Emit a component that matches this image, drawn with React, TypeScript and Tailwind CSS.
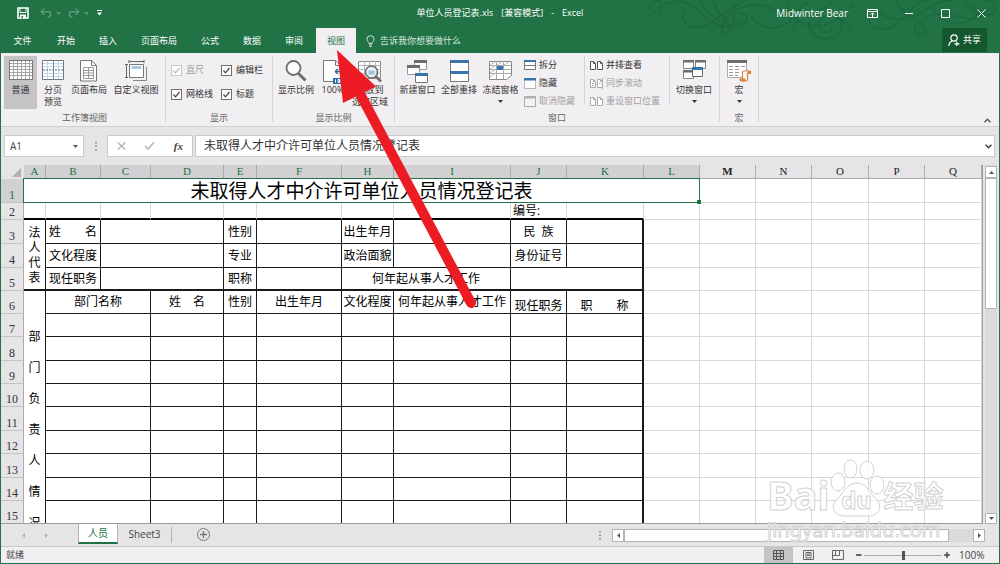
import type { ReactNode } from "react";

const tabs = ["开始", "插入", "页面布局", "公式", "数据", "审阅", "视图"];

const columns = [
  { name: "A", width: "w-[22px]" },
  { name: "B", width: "w-[55px]" },
  { name: "C", width: "w-[50px]" },
  { name: "D", width: "w-[73px]" },
  { name: "E", width: "w-[33px]" },
  { name: "F", width: "w-[85px]" },
  { name: "H", width: "w-[52px]" },
  { name: "I", width: "w-[117px]" },
  { name: "J", width: "w-[56px]" },
  { name: "K", width: "w-[77px]" },
  { name: "L", width: "w-[56px]" },
  { name: "M", width: "w-[56px]" },
  { name: "N", width: "w-[56px]" },
  { name: "O", width: "w-[57px]" },
  { name: "P", width: "w-[56px]" },
  { name: "Q", width: "" },
];

interface ICell {
  text?: string;
  span?: number;
  bottom?: boolean;
}

const personRows: ICell[][] = [
  [
    { text: "姓\u3000\u3000名" },
    { span: 2 },
    { text: "性别" },
    {},
    { text: "出生年月" },
    {},
    { text: "民\u00a0\u00a0族" },
    {},
  ],
  [
    { text: "文化程度" },
    { span: 2 },
    { text: "专业" },
    {},
    { text: "政治面貌" },
    {},
    { text: "身份证号" },
    {},
  ],
  [
    { text: "现任职务" },
    { span: 2 },
    { text: "职称" },
    {},
    { text: "何年起从事人才工作", span: 2 },
    { span: 2 },
  ],
];

const departmentHead: ICell[] = [
  { text: "部门名称", span: 2 },
  { text: "姓\u3000名" },
  { text: "性别" },
  { text: "出生年月" },
  { text: "文化程度" },
  { text: "何年起从事人才工作" },
  { text: "现任职务", bottom: true },
  { text: "职\u3000\u3000称", bottom: true },
];

const emptyRow: ICell[] = [{ span: 2 }, {}, {}, {}, {}, {}, {}, {}];

const emptyRows = [
  { n: 7, height: "h-[23px]" },
  { n: 8, height: "h-[24px]" },
  { n: 9, height: "h-[23px]" },
  { n: 10, height: "h-[23px]" },
  { n: 11, height: "h-[24px]" },
  { n: 12, height: "h-[23px]" },
  { n: 13, height: "h-[24px]" },
  { n: 14, height: "h-[23px]" },
  { n: 15, height: "h-[23px]" },
];

const Caret: React.FC<{ className?: string }> = ({ className = "" }) => (
  <svg className={className} width="5" height="3" viewBox="0 0 5 3">
    <path d="M0 0h5L2.5 3z" fill="currentColor" />
  </svg>
);

/* ---------- ribbon icons ---------- */

const NormalIcon = () => (
  <svg width="24" height="21" viewBox="0 0 24 21" fill="none">
    <path d="M.5.5h23v19H.5z" fill="#fff" stroke="#777" />
    <path
      d="M4.5 1v18M8.5 1v18M12.5 1v18M16.5 1v18M20.5 1v18M1 3.5h22M1 6.5h22M1 9.5h22M1 12.5h22M1 15.5h22"
      stroke="#a5a5a5"
    />
  </svg>
);

const PageBreakIcon = () => (
  <svg width="22" height="21" viewBox="0 0 22 21" fill="none">
    <path d="M.5.5h21v19H.5z" fill="#fff" stroke="#777" />
    <path d="M1 3.5h20M1 6.5h20M1 13.5h20M1 16.5h20M5.5 1v18M16.5 1v18" stroke="#c3d8e6" />
    <path d="M1 10h20" stroke="#4a6f8f" strokeDasharray="2 1" />
    <path d="M11.5 1v19" stroke="#6c8ba5" />
  </svg>
);

const PageLayoutIcon = () => (
  <svg width="18" height="22" viewBox="0 0 18 22" fill="none">
    <path d="M.5.5h11l5 5v15.5H.5z" fill="#fff" stroke="#777" />
    <path d="M11.5.5v5h5" stroke="#777" />
    <path d="M3.5 7.5h10v11h-10zM3.5 10.5h10M3.5 13h10M3.5 15.5h10M8.5 7.5v11" stroke="#999" />
  </svg>
);

const CustomViewIcon = () => (
  <svg width="22" height="22" viewBox="0 0 22 22" fill="none">
    <path d="M4.5 4.5h14v13h-14z" fill="#fff" stroke="#777" />
    <path d="M6.5 6h10v3h-10z" fill="#a9cbe6" />
    <path d="M4 1.5h15M1.5 4v14M4 0v3M19 0v3M0 4.5h3M0 17.5h3" stroke="#666" />
    <path d="M21.5 7v13.5H8" stroke="#888" />
  </svg>
);

const ZoomIcon = () => (
  <svg width="22" height="22" viewBox="0 0 22 22" fill="none">
    <circle cx="8.5" cy="8" r="7" fill="#fff" stroke="#6e6e6e" strokeWidth="1.8" />
    <path d="M13.5 13.5l7 7" stroke="#6e6e6e" strokeWidth="3" />
  </svg>
);

const HundredIcon = () => (
  <svg width="20" height="24" viewBox="0 0 20 24" fill="none">
    <path d="M.5.5h12l5 5v16H.5z" fill="#fff" stroke="#777" />
    <path d="M12.5.5v5h5" stroke="#777" />
    <path d="M12 11.5h7M12 11.5l3-2.5M12 11.5l3 2.5" stroke="#2e6da4" strokeWidth="1.4" />
    <path d="M10 18h10v6H10z" fill="#2e6da4" />
    <path d="M12.5 19.5v3M15 19.5h1.5v3H15zM18 19.5v3" stroke="#fff" />
  </svg>
);

const ZoomSelectionIcon = () => (
  <svg width="24" height="23" viewBox="0 0 24 23" fill="none">
    <path d="M.5 1.5h22v17H.5z" fill="#fff" stroke="#888" />
    <path d="M1 5.5h22M1 9.5h22M1 13.5h22M6.5 1v17M11.5 1v17M17.5 1v17" stroke="#b5b5b5" />
    <circle cx="13.5" cy="12" r="6" fill="#e8f1f9" stroke="#6e6e6e" strokeWidth="1.6" />
    <path d="M10.5 10.5h6v4h-6z" fill="#9cc3e3" />
    <path d="M18 16.5l5 5" stroke="#6e6e6e" strokeWidth="2.6" />
  </svg>
);

const NewWindowIcon = () => (
  <svg width="22" height="24" viewBox="0 0 22 24" fill="none">
    <path d="M7.5.5h12v9h-12z" fill="#fff" stroke="#999" />
    <path d="M7 0h13v3H7z" fill="#6e6e6e" />
    <path d="M.5 5.5h12v9H.5z" fill="#fff" stroke="#999" />
    <path d="M0 5h13v3H0z" fill="#6e6e6e" />
    <path d="M8.5 13.5h12v9h-12z" fill="#fff" stroke="#777" />
    <path d="M8 13h13v3H8z" fill="#3874ac" />
  </svg>
);

const ArrangeIcon = () => (
  <svg width="19" height="23" viewBox="0 0 19 23" fill="none">
    <path d="M.5.5h18v21H.5z" fill="#fff" stroke="#777" />
    <path d="M0 0h19v3H0zM0 11h19v3H0z" fill="#3874ac" />
  </svg>
);

const FreezeIcon = () => (
  <svg width="23" height="21" viewBox="0 0 23 21" fill="none">
    <path d="M.5 1.5h22v14l-5 4H.5z" fill="#fff" stroke="#888" />
    <path d="M1 5.5h21M1 9.5h21M1 13.5h21M7.5 1v18M14.5 1v18" stroke="#aaa" />
    <path d="M1 5l5-3M1 9l6-4M1 13l6-4M8 5l5-3M15 5l5-3M1 17l6-4" stroke="#bbb" />
    <path d="M8 6h6v4H8z" fill="#3874ac" />
  </svg>
);

const SwitchIcon = () => (
  <svg width="23" height="20" viewBox="0 0 23 20" fill="none">
    <path d="M.5.5h10v8H.5zM12.5.5h10v8h-10zM.5 10.5h10v8H.5z" fill="#fff" stroke="#888" />
    <path d="M0 0h11v2.500H0zM12 0h11v2.500H12zM0 10h11v2.500H0z" fill="#6e6e6e" />
    <path d="M9.5 7.5h10v9h-10z" fill="#fff" stroke="#666" />
    <path d="M9 7h11v3H9z" fill="#3874ac" />
  </svg>
);

const MacroIcon = () => (
  <svg width="24" height="22" viewBox="0 0 24 22" fill="none">
    <path d="M.5.5h19v17H.5z" fill="#fff" stroke="#aaa" />
    <path d="M0 0h20v3H0z" fill="#6e6e6e" />
    <path
      d="M2 6.5h4M8 6.5h4M14 6.500h4M2 9.500h4M8 9.500h4M2 12.500h4M8 12.500h4M2 15.500h4M8 15.500h3"
      stroke="#999"
    />
    <path
      d="M15.500 12.500c0-1 .5-1.500 1.500-1.500h5.500v2h-2v6.500c0 1-.5 1.500-1.500 1.500h-3.500z"
      fill="#fff"
      stroke="#dd8239"
      strokeWidth="1.200"
    />
    <path d="M12.500 18.500h6v2.700h-5c-1 0-1-1-1-2.700z" fill="#dd8239" />
    <path d="M21 11h3v3h-3z" fill="#dd8239" />
  </svg>
);

const SplitIcon = () => (
  <svg width="12" height="10" viewBox="0 0 12 10" fill="none">
    <path d="M.5.5h11v9H.5z" fill="#fff" stroke="#777" />
    <path d="M0 0h12v2H0z" fill="#3874ac" />
    <path d="M1 5.5h10" stroke="#777" />
  </svg>
);

const HideIcon = () => (
  <svg width="12" height="11" viewBox="0 0 12 11" fill="none">
    <path d="M.5.5h11v10H.5z" fill="#fff" stroke="#777" strokeDasharray="1 1" />
    <path d="M0 0h12v2.500H0z" fill="#3874ac" />
  </svg>
);

const UnhideIcon = () => (
  <svg width="12" height="11" viewBox="0 0 12 11" fill="none">
    <path d="M.5.5h11v10H.5z" fill="#f4f2f4" stroke="#aaa" />
    <path d="M0 0h12v2.500H0z" fill="#b0b0b0" />
  </svg>
);

const PagesIcon: React.FC<{ color: string; sync?: boolean }> = ({ color, sync }) => (
  <svg width="13" height="11" viewBox="0 0 13 11" fill="none" stroke={color}>
    <path d="M.5 1.5h3l2 2v6h-5z" fill="#fff" />
    <path d="M7.5 1.5h3l2 2v6h-5z" fill="#fff" />
    <path d="M3.5 1.5v2h2M10.5 1.5v2h2" />
    {sync && <path d="M12.5 0v11M2 5.5h2M9 5.5h2M2 7.5h2" />}
  </svg>
);

/* ---------- ribbon parts ---------- */

const RibbonButton: React.FC<{
  icon: ReactNode;
  lines: string[];
  width: string;
  active?: boolean;
  caret?: boolean;
}> = ({ icon, lines, width, active, caret }) => (
  <button
    type="button"
    className={`flex h-[53px] shrink-0 flex-col items-center pt-1 ${width} ${
      active ? "bg-[#c5c3c5]" : "hover:bg-[#dcdadc]"
    }`}
  >
    <span className="flex h-6 items-start justify-center">{icon}</span>
    {lines.map((line) => (
      <span key={line} className="whitespace-nowrap leading-[12px]">
        {line}
      </span>
    ))}
    {caret && <Caret className="mt-1" />}
  </button>
);

const SmallButton: React.FC<{ icon: ReactNode; label: string; disabled?: boolean }> = ({
  icon,
  label,
  disabled,
}) => (
  <button
    type="button"
    disabled={disabled}
    className="flex h-[18px] items-center gap-[3px] whitespace-nowrap leading-[12px] disabled:text-[#a3a1a3]"
  >
    {icon}
    {label}
  </button>
);

const RibbonGroup: React.FC<{ title: string; className?: string; children: ReactNode }> = ({
  title,
  className = "",
  children,
}) => (
  <div className="flex shrink-0 flex-col">
    <div className={`flex h-14 items-start ${className}`}>{children}</div>
    <div className="text-center leading-[12px] text-[#666]">{title}</div>
  </div>
);

const Separator = () => <div className="mb-1 w-px shrink-0 bg-[#d5d3d5]" />;

const InnerSeparator = () => <div className="h-12 w-px shrink-0 bg-[#d5d3d5]" />;

const RibbonCheckbox: React.FC<{ label: string; disabled?: boolean }> = ({ label, disabled }) => (
  <label
    className={`flex h-6 items-center gap-1 whitespace-nowrap ${disabled ? "text-[#a3a1a3]" : ""}`}
  >
    <span className="relative flex">
      <input
        type="checkbox"
        defaultChecked
        disabled={disabled}
        className="peer size-[11px] appearance-none border border-[#6e6e6e] bg-white disabled:border-[#c8c6c8]"
      />
      <svg
        className="pointer-events-none absolute inset-0 hidden peer-checked:block"
        width="11"
        height="11"
        viewBox="0 0 11 11"
        fill="none"
      >
        <path d="M2.5 5.5l2 2.300 4-4.800" stroke={disabled ? "#bbb" : "#444"} strokeWidth="1.200" />
      </svg>
    </span>
    {label}
  </label>
);

/* ---------- title bar ---------- */

const Swirls = () => (
  <svg
    className="pointer-events-none absolute right-0 top-0"
    width="352"
    height="53"
    viewBox="0 0 352 53"
    fill="none"
    stroke="#1c683c"
    strokeWidth="1.400"
  >
    <path d="M14 2c-8-4-14 4-9 9s12 0 8-5M12 8c12-10 28-8 38 2s24 20 38 17 16-13 6-14-10 9-2 11" />
    <path d="M38 10c-6 12 4 20 16 17s30-20 44-26M52 0c8 14 24 26 36 24" />
    <path d="M66 0c4 14 14 20 17 27s-7 10-8 2 10-22 30-24 30 12 46 12 26-6 34-16" />
    <path d="M104 16c8 12 22 16 34 8s12-18 24-22M140 2c2 14 14 24 28 24s24-6 40-22" />
    <path d="M162 22c0 20 30 22 32 6s-22-16-22-4 14 10 13 2M154 20c-8 4-12 10-6 10M192 20c14 4 16 12 6 10" />
    <path d="M222 18c0 12 18 14 28 6s18-24 32-24M226 6c10 14 30 18 46 8s22-14 34-14" />
    <path d="M248 0c8 16 26 20 30 27s-8 11-10 3 14-18 30-16 34 12 44-6" />
    <path d="M286 8c8 14 24 20 38 12s6-18-2-12M318 0c4 8 16 18 26 14s2-14-6-14" />
  </svg>
);

const TitleBar = () => (
  <div className="relative grid h-7 grid-cols-[1fr_auto_1fr] items-center pb-[2px] text-[9px] text-white">
    <div className="flex items-center pl-4">
      <button type="button" aria-label="保存">
        <svg width="12" height="12" viewBox="0 0 12 12" fill="none">
          <path d="M1 1h10v10H1z" stroke="#fff" strokeWidth="1.600" />
          <path d="M3 1v4.500h6V1" stroke="#fff" />
          <path d="M3 7.500h6v4H3z" fill="#fff" />
          <path d="M4.500 9H6v2.500H4.500z" fill="#217346" />
        </svg>
      </button>
      <button type="button" aria-label="撤消" className="ml-[11px] flex items-center gap-1 text-[#5c9a76]">
        <svg width="12" height="10" viewBox="0 0 12 10" fill="none" stroke="currentColor" strokeWidth="1.400">
          <path d="M4.5.5L1 3.700l3.500 3M1 3.700h6.500c4.500 0 4.500 5.300 0 5.300" />
        </svg>
        <Caret />
      </button>
      <button type="button" aria-label="恢复" className="ml-[7px] flex items-center gap-1 text-[#5c9a76]">
        <svg width="12" height="10" viewBox="0 0 12 10" fill="none" stroke="currentColor" strokeWidth="1.400">
          <path d="M7.5.5L11 3.700l-3.500 3M11 3.700H4.500C0 3.700 0 9 4.500 9" />
        </svg>
        <Caret />
      </button>
      <button type="button" aria-label="自定义快速访问工具栏" className="ml-2">
        <svg width="5" height="6" viewBox="0 0 5 6" fill="#fff">
          <path d="M0 0h5v1H0zM0 2.500h5L2.500 5.500z" />
        </svg>
      </button>
    </div>
    <h1 className="flex gap-2 whitespace-nowrap">
      <span>单位人员登记表.xls</span>
      <span>[兼容模式]</span>
      <span>-</span>
      <span>Excel</span>
    </h1>
    <div className="z-10 flex items-center justify-end pr-[13px]">
      <span className="text-[10px]">Midwinter Bear</span>
      <button type="button" aria-label="功能区显示选项" className="ml-[19px]">
        <svg width="11" height="9" viewBox="0 0 11 9" fill="none" stroke="#fff">
          <path d="M.5.5h10v8H.5zM.5 2.500h10M5.500 8V4M3.500 5.800l2-2 2 2" />
        </svg>
      </button>
      <button type="button" aria-label="最小化" className="ml-[27px]">
        <svg width="9" height="9" viewBox="0 0 9 9" stroke="#fff">
          <path d="M0 4.500h8" />
        </svg>
      </button>
      <button type="button" aria-label="还原" className="ml-[27px]">
        <svg width="9" height="9" viewBox="0 0 9 9" fill="none" stroke="#fff">
          <path d="M.5.5h8v8h-8z" />
        </svg>
      </button>
      <button type="button" aria-label="关闭" className="ml-[27px]">
        <svg width="9" height="9" viewBox="0 0 9 9" stroke="#fff">
          <path d="M.5.5l8 8M8.500.5l-8 8" />
        </svg>
      </button>
    </div>
  </div>
);

const TabBar = () => (
  <div className="relative flex h-[25px] items-stretch text-[9px] text-white">
    <button type="button" className="w-[43px]">
      文件
    </button>
    <nav className="ml-[2px] flex gap-[2px]">
      {tabs.map((tab) => (
        <button
          key={tab}
          type="button"
          className={`whitespace-nowrap px-[11px] ${
            tab === "视图" ? "bg-[#f1eff1] text-[#217346]" : "hover:bg-[#439467]"
          }`}
        >
          {tab}
        </button>
      ))}
    </nav>
    <button type="button" className="ml-[10px] flex items-center gap-[5px] text-[#d5e6dc]">
      <svg width="9" height="12" viewBox="0 0 9 12" fill="none" stroke="currentColor">
        <path d="M3 8.500C3 7 1 6.500 1 4.200a3.500 3.500 0 017 0C8 6.500 6 7 6 8.500zM3 10h3M3.500 11.500h2" />
      </svg>
      告诉我你想要做什么
    </button>
    <button
      type="button"
      className="mb-px ml-auto mr-3 flex w-[45px] items-center justify-center gap-[3px] bg-[#15582f]"
    >
      <svg width="12" height="13" viewBox="0 0 12 13" fill="none" stroke="#fff" strokeWidth="1.200">
        <circle cx="6" cy="4" r="3.200" />
        <path d="M.8 12c.3-3 1.800-4.500 3.700-5.200M8.800 7.500V12M6.500 9.800h5" />
      </svg>
      共享
    </button>
  </div>
);

const Ribbon = () => (
  <div className="flex h-[74px] border-b border-[#d2d0d2] bg-[#f1eff1] pl-[3px] pt-[3px] text-[9px] text-[#333]">
    <RibbonGroup title="工作簿视图" className="pr-[2px]">
      <RibbonButton icon={<NormalIcon />} lines={["普通"]} width="w-[33px]" active />
      <RibbonButton icon={<PageBreakIcon />} lines={["分页", "预览"]} width="w-[32px]" />
      <RibbonButton icon={<PageLayoutIcon />} lines={["页面布局"]} width="w-[40px]" />
      <RibbonButton icon={<CustomViewIcon />} lines={["自定义视图"]} width="w-[54px]" />
    </RibbonGroup>
    <Separator />
    <RibbonGroup title="显示" className="w-[106px] gap-3 pl-[5px] pt-[2px]">
      <div>
        <RibbonCheckbox label="直尺" disabled />
        <RibbonCheckbox label="网格线" />
      </div>
      <div className="-ml-1">
        <RibbonCheckbox label="编辑栏" />
        <RibbonCheckbox label="标题" />
      </div>
    </RibbonGroup>
    <Separator />
    <RibbonGroup title="显示比例" className="w-[121px] pl-[3px]">
      <RibbonButton icon={<ZoomIcon />} lines={["显示比例"]} width="w-[40px]" />
      <RibbonButton icon={<HundredIcon />} lines={["100%"]} width="w-[34px]" />
      <RibbonButton icon={<ZoomSelectionIcon />} lines={["缩放到", "选定区域"]} width="w-[40px]" />
    </RibbonGroup>
    <Separator />
    <RibbonGroup title="窗口" className="w-[324px] pl-[2px]">
      <RibbonButton icon={<NewWindowIcon />} lines={["新建窗口"]} width="w-[41px]" />
      <RibbonButton icon={<ArrangeIcon />} lines={["全部重排"]} width="w-[42px]" />
      <RibbonButton icon={<FreezeIcon />} lines={["冻结窗格"]} width="w-[41px]" caret />
      <div className="ml-[3px] w-[60px]">
        <SmallButton icon={<SplitIcon />} label="拆分" />
        <SmallButton icon={<HideIcon />} label="隐藏" />
        <SmallButton icon={<UnhideIcon />} label="取消隐藏" disabled />
      </div>
      <InnerSeparator />
      <div className="w-[84px] pl-[5px]">
        <SmallButton icon={<PagesIcon color="#555" />} label="并排查看" />
        <SmallButton icon={<PagesIcon color="#aaa" sync />} label="同步滚动" disabled />
        <SmallButton icon={<PagesIcon color="#aaa" />} label="重设窗口位置" disabled />
      </div>
      <InnerSeparator />
      <RibbonButton icon={<SwitchIcon />} lines={["切换窗口"]} width="w-[48px]" caret />
    </RibbonGroup>
    <Separator />
    <RibbonGroup title="宏" className="w-[38px]">
      <RibbonButton icon={<MacroIcon />} lines={["宏"]} width="w-[38px]" caret />
    </RibbonGroup>
    <Separator />
    <button type="button" aria-label="折叠功能区" className="mb-[3px] ml-auto mr-2 self-end">
      <svg width="7" height="5" viewBox="0 0 7 5" fill="none" stroke="#555" strokeWidth="1.400">
        <path d="M.5 4.200l3-3 3 3" />
      </svg>
    </button>
  </div>
);

const Dots = () => (
  <svg width="2" height="9" viewBox="0 0 2 9" fill="#999">
    <path d="M0 0h2v1.500H0zM0 3.500h2V5H0zM0 7h2v1.500H0z" />
  </svg>
);

const FormulaBar = () => (
  <div className="my-2 flex h-[22px] items-stretch gap-[2px] pl-[3px] pr-1">
    <div className="flex w-20 items-center border border-[#cbc9cb] bg-white pr-[5px] text-[#555]">
      <input
        aria-label="名称框"
        defaultValue="A1"
        className="min-w-0 flex-1 bg-transparent pl-[5px] text-[10px] text-[#444] outline-none"
      />
      <Caret />
    </div>
    <div className="flex w-[19px] items-center justify-center">
      <Dots />
    </div>
    <div className="flex w-[86px] items-center justify-between border border-[#cbc9cb] bg-white px-[9px]">
      <button type="button" aria-label="取消">
        <svg width="9" height="8" viewBox="0 0 9 8" stroke="#b5b3b5" strokeWidth="1.300">
          <path d="M.8.5l7.400 7M8.200.5l-7.400 7" />
        </svg>
      </button>
      <button type="button" aria-label="输入">
        <svg width="11" height="8" viewBox="0 0 11 8" fill="none" stroke="#b5b3b5" strokeWidth="1.600">
          <path d="M1 4l3 3 6-6.500" />
        </svg>
      </button>
      <button
        type="button"
        className="font-['Liberation_Serif',serif] text-[11px] font-bold italic leading-[12px] text-[#444]"
      >
        fx
      </button>
    </div>
    <div className="flex min-w-0 flex-1 items-center border border-[#cbc9cb] bg-white pr-[2px]">
      <input
        aria-label="编辑栏"
        defaultValue="未取得人才中介许可单位人员情况登记表"
        className="min-w-0 flex-1 bg-transparent pl-2 text-[12px] text-[#333] outline-none"
      />
      <svg width="7" height="5" viewBox="0 0 7 5" fill="none" stroke="#444" strokeWidth="1.500">
        <path d="M.5.8l3 3 3-3" />
      </svg>
    </div>
  </div>
);

/* ---------- worksheet ---------- */

const RowHead: React.FC<{ n?: number; active?: boolean }> = ({ n, active }) => (
  <th
    scope="row"
    className={`border-b border-r border-b-[#c5c3c5] border-r-[#ababab] p-0 text-center align-bottom font-['Liberation_Serif',serif] text-[12px] font-normal leading-[14px] ${
      active ? "bg-[#d2d0d2] text-[#217346]" : "bg-[#e6e4e6] text-[#333]"
    }`}
  >
    {n}
  </th>
);

const PlainCells: React.FC<{ count: number; heavy?: boolean }> = ({ count, heavy }) => (
  <>
    {Array.from({ length: count }, (_, i) => (
      <td
        key={i}
        className={`border-r border-r-[#d9d9d9] p-0 ${
          heavy ? "border-b-2 border-b-black" : "border-b border-b-[#d9d9d9]"
        }`}
      />
    ))}
  </>
);

const FormCells: React.FC<{ cells: ICell[]; heavy?: boolean }> = ({ cells, heavy }) => (
  <>
    {cells.map((cell, i) => (
      <td
        key={i}
        colSpan={cell.span}
        className={`whitespace-nowrap border-[#1a1a1a] p-0 text-center leading-[14px] ${
          cell.bottom ? "align-bottom" : "align-middle"
        } ${heavy ? "border-b-2" : "border-b"} ${i === cells.length - 1 ? "border-r-2" : "border-r"}`}
      >
        {cell.text}
      </td>
    ))}
  </>
);

const Worksheet = () => (
  <div className="min-w-0 flex-1 overflow-hidden border-b border-r border-[#9b9b9b] bg-white">
    <table className="w-full table-fixed border-separate border-spacing-0 text-[12px] text-black">
      <colgroup>
        <col className="w-[23px]" />
        {columns.map((column) => (
          <col key={column.name} className={column.width} />
        ))}
      </colgroup>
      <thead>
        <tr className="h-[14px]">
          <td className="bg-[#e6e4e6] p-0">
            <svg className="ml-auto mr-[3px]" width="9" height="9" viewBox="0 0 9 9">
              <path d="M9 0v9H0z" fill="#b3b1b3" />
            </svg>
          </td>
          {columns.map((column, i) => (
            <th
              key={column.name}
              scope="col"
              className={`border-b border-r border-[#ababab] p-0 text-center font-['Liberation_Serif',serif] text-[11px] leading-[13px] ${
                i < 11 ? "bg-[#d2d0d2] text-[#217346]" : "bg-[#e6e4e6] text-[#222]"
              } ${column.name === "M" ? "font-bold" : "font-normal"}`}
            >
              {column.name}
            </th>
          ))}
        </tr>
      </thead>
      <tbody>
        <tr className="h-[24px]">
          <RowHead n={1} active />
          <td
            colSpan={11}
            className="relative border-b border-r border-[#217346] p-0 text-center text-[19px] leading-[22px]"
          >
            未取得人才中介许可单位人员情况登记表
            <span className="absolute -inset-px border border-[#217346]" />
            <span className="absolute -bottom-[2px] -right-[2px] size-1 bg-[#217346]" />
          </td>
          <PlainCells count={5} />
        </tr>
        <tr className="h-[17px]">
          <RowHead n={2} />
          <PlainCells count={8} heavy />
          <td className="whitespace-nowrap border-b-2 border-r border-b-black border-r-[#d9d9d9] p-0 pl-[2px] leading-[14px]">
            编号:
          </td>
          <PlainCells count={1} heavy />
          <PlainCells count={6} />
        </tr>
        {personRows.map((cells, i) => (
          <tr key={i} className={i === 2 ? "h-[23px]" : "h-[24px]"}>
            <RowHead n={i + 3} />
            {i === 0 && (
              <td
                rowSpan={3}
                className="border-b-2 border-r border-[#1a1a1a] p-0 text-center align-middle leading-[15px]"
              >
                {[..."法人代表"].map((char) => (
                  <span key={char} className="block">
                    {char}
                  </span>
                ))}
              </td>
            )}
            <FormCells cells={cells} heavy={i === 2} />
            <PlainCells count={6} />
          </tr>
        ))}
        <tr className="h-[23px]">
          <RowHead n={6} />
          <td
            rowSpan={11}
            className="border-r border-[#1a1a1a] p-0 pt-[30px] text-center align-top leading-[31px]"
          >
            {[..."部门负责人情况"].map((char) => (
              <span key={char} className="block">
                {char}
              </span>
            ))}
          </td>
          <FormCells cells={departmentHead} />
          <PlainCells count={6} />
        </tr>
        {emptyRows.map((row) => (
          <tr key={row.n} className={row.height}>
            <RowHead n={row.n} />
            <FormCells cells={emptyRow} />
            <PlainCells count={6} />
          </tr>
        ))}
        <tr className="h-[23px]">
          <RowHead />
          <FormCells cells={emptyRow} />
          <PlainCells count={6} />
        </tr>
      </tbody>
    </table>
  </div>
);

const scrollButton = "flex shrink-0 items-center justify-center border border-[#b5b3b5] bg-white";

const VerticalScroll = () => (
  <div className="ml-[2px] mr-[2px] flex w-3 flex-col bg-[#dbd9db]">
    <button type="button" aria-label="向上滚动" className={`${scrollButton} mt-px h-3`}>
      <Caret className="rotate-180 text-[#555]" />
    </button>
    <div className="h-[131px] border border-[#b5b3b5] bg-white" />
    <button type="button" aria-label="向下滚动" className={`${scrollButton} mt-auto h-[11px]`}>
      <Caret className="text-[#555]" />
    </button>
  </div>
);

const SheetBar = () => (
  <div className="flex h-[22px] items-start">
    <div className="flex w-[77px] items-center gap-[18px] self-center pl-5 text-[#b5b3b5]">
      <Caret className="rotate-90" />
      <Caret className="-rotate-90" />
    </div>
    <button
      type="button"
      className="h-5 w-10 border-x border-b-2 border-x-[#b5b3b5] border-b-[#217346] bg-white text-[10px] leading-[18px] text-[#217346]"
    >
      人员
    </button>
    <button type="button" className="h-5 w-[53px] text-[10px] leading-[18px] text-[#444]">
      Sheet3
    </button>
    <div className="mt-[3px] h-4 w-px bg-[#b5b3b5]" />
    <button type="button" aria-label="新工作表" className="ml-[25px] mt-1">
      <svg width="13" height="13" viewBox="0 0 13 13" fill="none" stroke="#777">
        <circle cx="6.500" cy="6.500" r="6" />
        <path d="M6.500 3v7M3 6.500h7" strokeWidth="1.300" />
      </svg>
    </button>
    <div className="ml-auto flex w-[400px] items-center self-center">
      <Dots />
      <button type="button" aria-label="向左滚动" className={`${scrollButton} ml-[11px] h-[13px] w-3`}>
        <Caret className="rotate-90 text-[#555]" />
      </button>
      <div className="flex h-[13px] flex-1 bg-[#dbd9db]">
        <div className="w-[93%] border border-[#b5b3b5] bg-white" />
      </div>
      <button type="button" aria-label="向右滚动" className={`${scrollButton} mr-[14px] h-[13px] w-3`}>
        <Caret className="-rotate-90 text-[#555]" />
      </button>
    </div>
  </div>
);

const StatusBar = () => (
  <footer className="flex h-[17px] items-center border-t border-[#cbc9cb] bg-[#f1eff1] text-[10px] text-[#444]">
    <span className="pl-[5px] text-[9px]">就绪</span>
    <div className="ml-auto flex items-center self-stretch">
      <button
        type="button"
        aria-label="普通"
        className="flex w-[29px] items-center justify-center self-stretch bg-[#c5c3c5]"
      >
        <svg width="11" height="10" viewBox="0 0 11 10" fill="none" stroke="#555">
          <path d="M.5.5h10v9H.5zM.5 3.500h10M.5 6.500h10M3.500.5v9M7.500.5v9" />
        </svg>
      </button>
      <button type="button" aria-label="页面布局" className="ml-[10px]">
        <svg width="11" height="10" viewBox="0 0 11 10" fill="none" stroke="#666">
          <path d="M.5.5h10v9H.5zM3 2.500h5v5.500H3zM4 4h3M4 5.500h3" />
        </svg>
      </button>
      <button type="button" aria-label="分页预览" className="ml-[18px]">
        <svg width="12" height="10" viewBox="0 0 12 10" fill="none" stroke="#666">
          <path d="M.5.5h11v9H.5zM3.500.5v5h4v-5M.5 5.500h3" />
        </svg>
      </button>
      <button type="button" aria-label="缩小" className="ml-3 flex">
        <svg width="6" height="6" viewBox="0 0 6 6" stroke="#444" strokeWidth="1.600">
          <path d="M0 3h5.500" />
        </svg>
      </button>
      <input
        type="range"
        aria-label="显示比例"
        defaultValue={50}
        className="mx-[2px] h-[9px] w-[78px] appearance-none bg-transparent bg-[linear-gradient(#aaa,#aaa)] bg-[length:100%_1px] bg-center bg-no-repeat [&::-webkit-slider-thumb]:h-[9px] [&::-webkit-slider-thumb]:w-[3px] [&::-webkit-slider-thumb]:appearance-none [&::-webkit-slider-thumb]:bg-[#555]"
      />
      <button type="button" aria-label="放大" className="flex">
        <svg width="6" height="6" viewBox="0 0 6 6" stroke="#444" strokeWidth="1.400">
          <path d="M0 3h6M3 0v6" />
        </svg>
      </button>
      <span className="ml-[9px] w-10">100%</span>
    </div>
  </footer>
);

/* ---------- overlays ---------- */

const Watermark = () => (
  <div className="pointer-events-none absolute bottom-[20px] right-[50px] w-[182px] font-['Noto_Sans','Noto_Sans_CJK_SC',sans-serif] text-white/80 [-webkit-text-stroke:1px_#d2d2d2]">
    <div className="flex items-end">
      <span className="text-[40px] font-bold leading-[44px]">Bai</span>
      <div className="relative h-[58px] w-[54px]">
        <svg width="54" height="58" viewBox="0 0 54 58" fill="#ffffffcc" stroke="#d2d2d2">
          <ellipse cx="8" cy="23" rx="7" ry="9" />
          <ellipse cx="20.500" cy="10" rx="6.500" ry="9" />
          <ellipse cx="37" cy="11" rx="7" ry="9" />
          <ellipse cx="47" cy="26" rx="7" ry="9" />
          <path d="M27 24c10 0 13 11 19 16 8 8 2 17-7 17H15C5 57-1 48 7 40c7-6 10-16 20-16z" />
        </svg>
        <span className="absolute inset-x-0 bottom-1 text-center text-[24px] font-bold leading-[26px]">
          du
        </span>
      </div>
      <span className="whitespace-nowrap text-[30px] font-bold leading-[42px]">经验</span>
    </div>
    <div className="text-[20px] leading-[26px]">jingyan.baidu.com</div>
  </div>
);

const Pointer = () => (
  <svg
    className="pointer-events-none absolute left-[329px] top-[45px]"
    width="155"
    height="270"
    viewBox="330 45 155 270"
  >
    <path d="M337 50l39 36.500-33 16.500z" fill="#ed1c24" />
    <path d="M358 90l113 213" stroke="#ed1c24" strokeWidth="10" strokeLinecap="round" />
  </svg>
);

export default function App() {
  return (
    <div className="relative flex h-screen flex-col overflow-hidden border-x border-b border-[#217346] bg-[#e6e4e6] font-['Open_Sans','Noto_Sans_CJK_SC',sans-serif]">
      <header className="relative bg-[#217346]">
        <Swirls />
        <TitleBar />
        <TabBar />
      </header>
      <Ribbon />
      <FormulaBar />
      <main className="flex min-h-0 flex-1">
        <Worksheet />
        <VerticalScroll />
      </main>
      <SheetBar />
      <StatusBar />
      <Watermark />
      <Pointer />
    </div>
  );
}
